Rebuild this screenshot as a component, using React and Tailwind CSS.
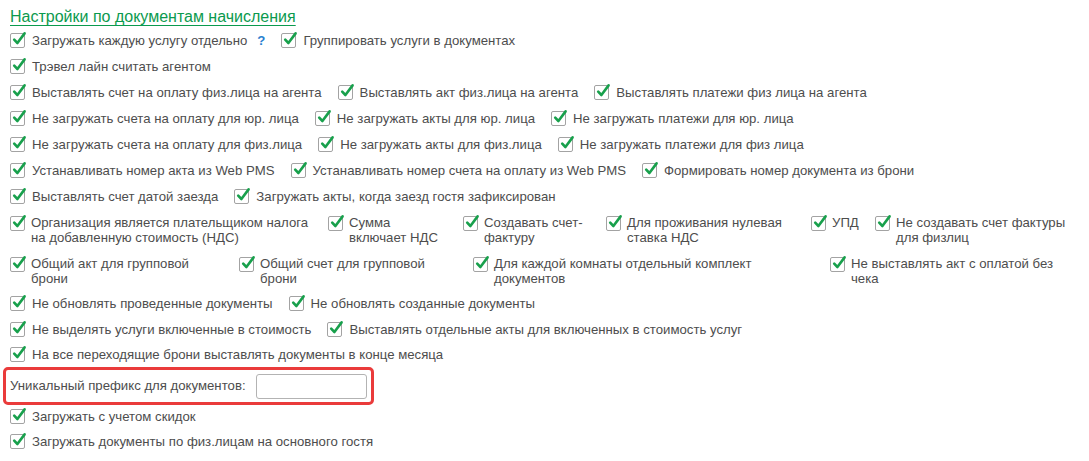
import React from 'react';

const Check = () => (
  <span className="relative shrink-0 w-[15px] h-[15px] border border-[#a3a3a3] rounded-[2px] bg-white">
    <svg className="absolute left-[1px] -top-[3px]" width="15" height="15" viewBox="0 0 15 15" fill="none">
      <path d="M2.2 8.6 L5.4 12 L12.6 2.4" stroke="#18a04c" strokeWidth="2.6" strokeLinecap="round" strokeLinejoin="round" />
    </svg>
  </span>
);

// single-line checkbox option
const Opt = ({ children }) => (
  <div className="flex items-center">
    <Check />
    <span className="ml-[7px] whitespace-nowrap">{children}</span>
  </div>
);

// option whose label wraps onto two lines
const WrapOpt = ({ box, text, children }) => (
  <div className={'flex items-start ' + box}>
    <span className="mt-[1px] flex"><Check /></span>
    <span className={'ml-[6px] leading-[15px] ' + text}>{children}</span>
  </div>
);

const Row = ({ children }) => <div className="flex items-center gap-4 h-[26px]">{children}</div>;

export default function App() {
  return (
    <div
      className="w-[1089px] h-[461px] overflow-hidden bg-white pl-[10px] pt-[7px] text-[13.2px] text-[#4d4d4d]"
      style={{ fontFamily: '"Liberation Sans", Arial, sans-serif' }}
    >
      <div className="h-[21px] text-[16px] leading-[20px] text-[#0b9a4e] underline underline-offset-[3px] decoration-1">
        Настройки по документам начисления
      </div>

      <Row>
        <div className="flex items-center">
          <Opt>Загружать каждую услугу отдельно</Opt>
          <span className="ml-[10px] text-[#2a7fcf] font-bold">?</span>
        </div>
        <Opt>Группировать услуги в документах</Opt>
      </Row>
      <Row>
        <Opt>Трэвел лайн считать агентом</Opt>
      </Row>
      <Row>
        <Opt>Выставлять счет на оплату физ.лица на агента</Opt>
        <Opt>Выставлять акт физ.лица на агента</Opt>
        <Opt>Выставлять платежи физ лица на агента</Opt>
      </Row>
      <Row>
        <Opt>Не загружать счета на оплату для юр. лица</Opt>
        <Opt>Не загружать акты для юр. лица</Opt>
        <Opt>Не загружать платежи для юр. лица</Opt>
      </Row>
      <Row>
        <Opt>Не загружать счета на оплату для физ.лица</Opt>
        <Opt>Не загружать акты для физ.лица</Opt>
        <Opt>Не загружать платежи для физ лица</Opt>
      </Row>
      <Row>
        <Opt>Устанавливать номер акта из Web PMS</Opt>
        <Opt>Устанавливать номер счета на оплату из Web PMS</Opt>
        <Opt>Формировать номер документа из брони</Opt>
      </Row>
      <Row>
        <Opt>Выставлять счет датой заезда</Opt>
        <Opt>Загружать акты, когда заезд гостя зафиксирован</Opt>
      </Row>

      <div className="flex h-[41px] pt-[5px]">
        <WrapOpt box="w-[318px]" text="w-[290px]">Организация является плательщиком налога на добавленную стоимость (НДС)</WrapOpt>
        <WrapOpt box="w-[135px]" text="w-[93px]">Сумма включает НДС</WrapOpt>
        <WrapOpt box="w-[143px]" text="w-[104px]">Создавать счет-фактуру</WrapOpt>
        <WrapOpt box="w-[205px]" text="w-[170px]">Для проживания нулевая ставка НДС</WrapOpt>
        <WrapOpt box="w-[64px]" text="w-[36px]">УПД</WrapOpt>
        <WrapOpt box="w-[200px]" text="w-[180px]">Не создавать счет фактуры для физлиц</WrapOpt>
      </div>
      <div className="flex h-[40px] pt-[5px]">
        <WrapOpt box="w-[229px]" text="w-[175px]">Общий акт для групповой брони</WrapOpt>
        <WrapOpt box="w-[234px]" text="w-[185px]">Общий счет для групповой брони</WrapOpt>
        <WrapOpt box="w-[357px]" text="w-[280px]">Для каждой комнаты отдельный комплект документов</WrapOpt>
        <WrapOpt box="w-[240px]" text="w-[220px]">Не выставлять акт с оплатой без чека</WrapOpt>
      </div>

      <Row>
        <Opt>Не обновлять проведенные документы</Opt>
        <Opt>Не обновлять созданные документы</Opt>
      </Row>
      <Row>
        <Opt>Не выделять услуги включенные в стоимость</Opt>
        <Opt>Выставлять отдельные акты для включенных в стоимость услуг</Opt>
      </Row>
      <div className="flex items-center h-[24px]">
        <Opt>На все переходящие брони выставлять документы в конце месяца</Opt>
      </div>

      <div className="-ml-[7px] w-[371px] h-[38px] border-[3px] border-[#ea3b3b] rounded-[5px] flex items-center justify-between pl-[4px] pr-[4px]">
        <span>Уникальный префикс для документов:</span>
        <input className="w-[111px] h-[25px] border border-[#b3b3b3] rounded-[3px] bg-white outline-none px-1 text-[13px]" />
      </div>

      <div className="flex items-center h-[24px]">
        <Opt>Загружать с учетом скидок</Opt>
      </div>
      <Row>
        <Opt>Загружать документы по физ.лицам на основного гостя</Opt>
      </Row>
    </div>
  );
}
